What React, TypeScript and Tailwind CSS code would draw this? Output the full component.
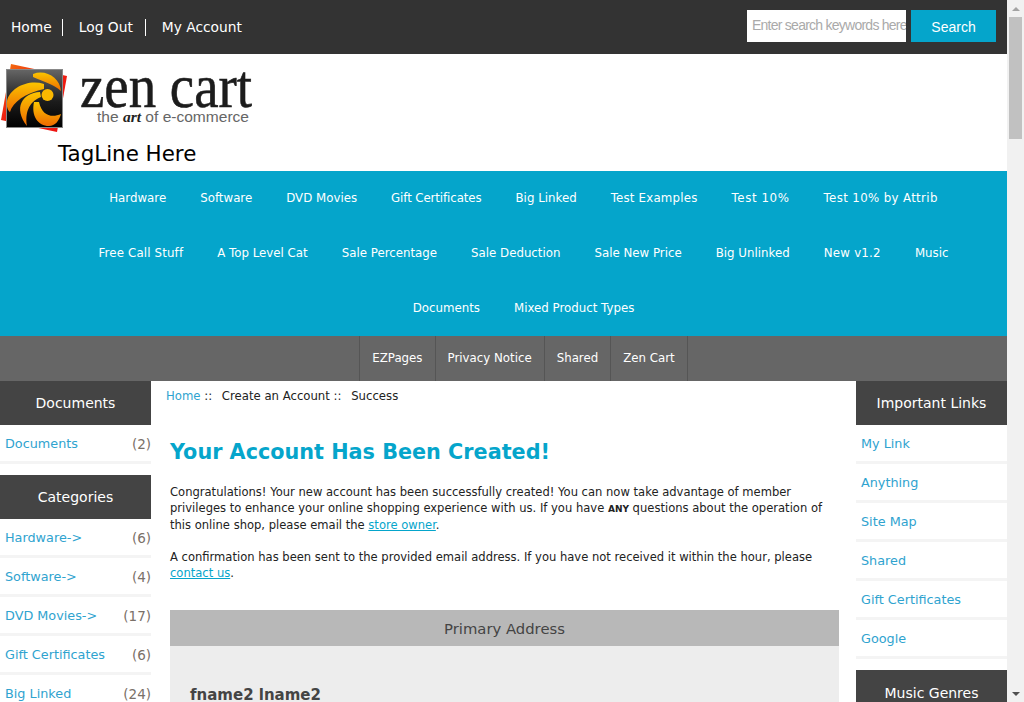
const font = { fontFamily: '"DejaVu Sans", Verdana, sans-serif' };
const arial = { fontFamily: '"Liberation Sans", Arial, sans-serif' };

const catRows = [
  ['Hardware', 'Software', 'DVD Movies', 'Gift Certificates', 'Big Linked', 'Test Examples', 'Test 10%', 'Test 10% by Attrib'],
  ['Free Call Stuff', 'A Top Level Cat', 'Sale Percentage', 'Sale Deduction', 'Sale New Price', 'Big Unlinked', 'New v1.2', 'Music'],
  ['Documents', 'Mixed Product Types'],
];

const catTracking: Record<string, string> = {
  'Gift Certificates': 'tracking-[-0.1px]',
  'Test 10%': 'tracking-[0.6px]',
  'Test 10% by Attrib': 'tracking-[0.35px]',
  'New v1.2': 'tracking-[0.25px]',
  'Test Examples': 'tracking-[0.2px]',
  'Free Call Stuff': 'tracking-[0.15px]',
};

const ezLinks = ['EZPages', 'Privacy Notice', 'Shared', 'Zen Cart'];

const categories: [string, string][] = [
  ['Hardware->', '(6)'],
  ['Software->', '(4)'],
  ['DVD Movies->', '(17)'],
  ['Gift Certificates', '(6)'],
  ['Big Linked', '(24)'],
];

const importantLinks = ['My Link', 'Anything', 'Site Map', 'Shared', 'Gift Certificates', 'Google'];

const SideHeading = ({ title, className = '' }: { title: string; className?: string }) => (
  <h3 className={`h-11 flex items-center justify-center bg-[#444444] text-white text-[14px] font-normal ${className}`}>{title}</h3>
);

const SideRow = ({ label, count }: { label: string; count?: string }) => (
  <div className="h-[39px] flex items-center justify-between pl-[5px] pt-[2px] border-b-[3px] border-[#f4f4f4] text-[12.8px] text-[#2fa3cf]">
    <span>{label}</span>
    {count && <span className="text-[13.5px] text-[#7a7068]">{count}</span>}
  </div>
);

const Logo = () => (
  <svg width="255" height="70" viewBox="0 0 255 70" className="block">
    <defs>
      <linearGradient id="back" x1="0" y1="0" x2="1" y2="1">
        <stop offset="0" stopColor="#f47a10" />
        <stop offset="0.4" stopColor="#ee2211" />
        <stop offset="1" stopColor="#ee1111" />
      </linearGradient>
      <linearGradient id="plate" x1="0" y1="0" x2="0" y2="1">
        <stop offset="0" stopColor="#666666" />
        <stop offset="0.55" stopColor="#1c1c1c" />
        <stop offset="1" stopColor="#000000" />
      </linearGradient>
      <linearGradient id="blade" x1="0" y1="0" x2="0" y2="1">
        <stop offset="0" stopColor="#fbc400" />
        <stop offset="1" stopColor="#ee6a00" />
      </linearGradient>
    </defs>
    <polygon points="11,0 67,12 57,68 1,56" fill="url(#back)" />
    <rect x="6.5" y="5.5" width="56" height="58" fill="url(#plate)" stroke="#888888" />
    <path d="M33 10C46 5 60 14 61 27C53 20 44 18 33 13Z" fill="url(#blade)" />
    <path d="M44 20C28 15 10 24 7 37C6 42 8 47 10 48C13 38 25 29 44 25Z" fill="url(#blade)" />
    <path d="M40 28C22 29 13 44 27 62C25 50 28 38 41 33Z" fill="url(#blade)" />
    <circle cx="47.5" cy="31" r="6" fill="#fbb800" />
    <path d="M34 38C31 52 38 62 49 62C55 62 59 57 61 50C52 54 42 52 39 38Z" fill="url(#blade)" />
    <text x="80" y="43" fontFamily="'Liberation Serif', serif" fontSize="62" textLength="172" lengthAdjust="spacingAndGlyphs" fill="#1c1c1c" stroke="#1c1c1c" strokeWidth="0.6">zen cart</text>
    <text x="97" y="58" fontFamily="'Liberation Sans', sans-serif" fontSize="15.5" textLength="152" lengthAdjust="spacingAndGlyphs" fill="#666666">
      the <tspan fontFamily="'Liberation Serif', serif" fontStyle="italic" fontWeight="700" fill="#222222">art</tspan> of e-commerce
    </text>
  </svg>
);

const App = () => {
  return (
    <div className="h-[702px] w-[1024px] overflow-hidden flex bg-white" style={font}>
      <div className="w-[1007px] shrink-0">
        <div className="h-[54px] bg-[#333333] flex items-center justify-between px-[11px] text-white">
          <ul className="flex items-center text-[13.8px]">
            <li className="h-[17px] flex items-center pr-[10px] mr-[16px] border-r border-white">Home</li>
            <li className="h-[17px] flex items-center pr-[12px] mr-[16px] border-r border-white">Log Out</li>
            <li>My Account</li>
          </ul>
          <div className="flex gap-[5px] pb-[2px]">
            <div className="w-[159px] h-8 bg-white flex items-center pl-[5px] pb-[2px] text-[14px] tracking-[-0.75px] text-[#aaaaaa] overflow-hidden whitespace-nowrap" style={arial}>Enter search keywords here</div>
            <button className="w-[85px] h-8 bg-[#05a5cb] text-white text-[14px] flex items-center justify-center pt-[2px]" style={arial}>Search</button>
          </div>
        </div>

        <div className="h-[117px] bg-white">
          <div className="pt-[10px]"><Logo /></div>
          <div className="pl-[58px] text-[21.4px] leading-6 mt-[8px] text-black">TagLine Here</div>
        </div>

        <nav className="bg-[#05a5cb] text-white text-[11.8px] pl-10">
          {catRows.map((row, i) => (
            <div key={i} className="h-[55px] flex items-center justify-center gap-[34px]">
              {row.map(c => <span key={c} className={catTracking[c]}>{c}</span>)}
            </div>
          ))}
        </nav>

        <div className="h-[45px] bg-[#666666] flex justify-center text-white text-[11.8px] pl-10">
          <div className="flex border-l border-[#555555]">
            {ezLinks.map(l => (
              <div key={l} className="px-3 flex items-center border-r border-[#555555]">{l}</div>
            ))}
          </div>
        </div>

        <div className="flex">
          <aside className="w-[151px] shrink-0">
            <SideHeading title="Documents" />
            <SideRow label="Documents" count="(2)" />
            <div className="h-[11px]" />
            <SideHeading title="Categories" />
            {categories.map(([l, c]) => <SideRow key={l} label={l} count={c} />)}
          </aside>

          <main className="w-[705px] shrink-0 pl-[15px] text-[11.55px] text-[#222222]">
            <div className="h-[30px] pt-[1px] flex items-center text-[11.7px]">
              <span className="text-[#2fa3cf]">Home</span>
              <span>&nbsp;::&nbsp;</span>
              <span className="ml-[6px]">Create an Account</span>
              <span>&nbsp;::&nbsp;</span>
              <span className="ml-[6px]">Success</span>
            </div>
            <div className="pl-1 pr-[17px]">
              <h1 className="text-[20.75px] font-bold text-[#05a5cb] leading-7 mt-[27px]">Your Account Has Been Created!</h1>
              <p className="mt-[18px] leading-4">
                Congratulations! Your new account has been successfully created! You can now take advantage of member privileges to enhance your online shopping experience with us. If you have <span className="text-[9px] font-bold">ANY</span> questions about the operation of this online shop, please email the <span className="text-[#05a5cb] underline">store owner</span>.
              </p>
              <p className="mt-4 leading-4">
                A confirmation has been sent to the provided email address. If you have not received it within the hour, please <span className="text-[#05a5cb] underline">contact us</span>.
              </p>
              <div className="mt-[29px] bg-[#ededed] h-[200px]">
                <div className="h-9 pt-[2px] bg-[#b8b8b8] flex items-center justify-center text-[14.8px] text-[#444444]">Primary Address</div>
                <div className="pl-5 pt-[38px] text-[15px] font-bold text-[#444444]">fname2 lname2</div>
              </div>
            </div>
          </main>

          <aside className="w-[151px] shrink-0">
            <SideHeading title="Important Links" />
            {importantLinks.map(l => <SideRow key={l} label={l} />)}
            <div className="h-[11px]" />
            <SideHeading title="Music Genres" className="pt-[3px]" />
          </aside>
        </div>
      </div>

      <div className="w-[17px] shrink-0 bg-[#f1f1f1] flex flex-col items-center">
        <div className="h-[17px] flex items-center justify-center">
          <div className="w-0 h-0 border-x-[4px] border-x-transparent border-b-[4px] border-b-[#a3a3a3]" />
        </div>
        <div className="w-[13px] h-[122px] bg-[#c1c1c1]" />
        <div className="flex-1" />
        <div className="h-[17px] flex items-center justify-center">
          <div className="w-0 h-0 border-x-[4px] border-x-transparent border-t-[4px] border-t-[#505050]" />
        </div>
      </div>
    </div>
  );
};

export default App;
